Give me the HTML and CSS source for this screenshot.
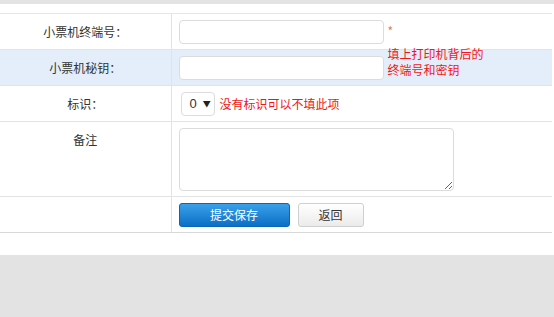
FILE: index.html
```html
<!DOCTYPE html>
<html lang="zh">
<head>
<meta charset="utf-8">
<link rel="stylesheet" href="styles.css">
</head>
<body>
<div class="topbar"></div>
<div class="panel">
  <table class="form">
    <tr>
      <td class="lbl">小票机终端号：</td>
      <td class="val"><div class="cellrow"><input class="txt" type="text"><span class="star">*</span></div></td>
    </tr>
    <tr class="hl">
      <td class="lbl">小票机秘钥：</td>
      <td class="val"><div class="cellrow"><input class="txt" type="text"><span class="tip">填上打印机背后的<br>终端号和密钥</span></div></td>
    </tr>
    <tr>
      <td class="lbl">标识：</td>
      <td class="val"><div class="cellrow"><span class="sel"><span class="selv">0</span><span class="arr">▼</span></span><span class="hint">没有标识可以不填此项</span></div></td>
    </tr>
    <tr class="tall">
      <td class="lbl top">备注</td>
      <td class="val top"><textarea class="area"></textarea></td>
    </tr>
    <tr>
      <td class="lbl"></td>
      <td class="val"><div class="cellrow"><button class="btn primary">提交保存</button><button class="btn plain">返回</button></div></td>
    </tr>
  </table>
</div>
<div class="footer"></div>
</body>
</html>
```
FILE: styles.css
```css
html, body {
  margin: 0;
  padding: 0;
  background: #ffffff;
  font-family: "Noto Sans CJK SC", "Liberation Sans", sans-serif;
  font-size: 12px;
  color: #333;
}
.topbar {
  height: 4px;
  background: #e3e3e3;
}
.panel {
  width: 552px;
  padding-top: 9px;
  height: 251px;
  box-sizing: border-box;
}
.form {
  width: 552px;
  border-collapse: collapse;
  border-top: 1px solid #e6e6e6;
}
.form td {
  border-bottom: 1px solid #e3e3e3;
  height: 36px;
  padding: 0 0 0 7px;
  box-sizing: border-box;
  vertical-align: middle;
}
.form tr:last-child td {
  border-bottom: 1px solid #d8d8d8;
}
.form td.lbl {
  width: 171px;
  border-right: 1px solid #e3e3e3;
  text-align: center;
  padding: 0;
  line-height: 24px;
}
.hl td {
  background: #e4eefa;
}
.tall td {
  height: 75px;
}
.form td.top {
  vertical-align: top;
  padding-top: 6px;
}
.cellrow {
  display: flex;
  align-items: center;
}
.txt {
  width: 205px;
  height: 24px;
  box-sizing: border-box;
  border: 1px solid #dcdcdc;
  border-radius: 4px;
  background: #fff;
  margin: 0;
  padding: 0 4px;
}
.star {
  color: #f57a3c;
  margin-left: 4px;
  margin-top: -2px;
  font-size: 12px;
}
.tip {
  color: #f31515;
  margin-left: 4px;
  margin-top: -12px;
  font-size: 12px;
  line-height: 16px;
}
.sel {
  display: flex;
  align-items: center;
  width: 34px;
  height: 24px;
  box-sizing: border-box;
  margin-left: 2px;
  border: 1px solid #dcdcdc;
  border-radius: 4px;
  background: #fff;
  padding-left: 8px;
}
.selv {
  font-family: "Liberation Sans", sans-serif;
  font-size: 13px;
  color: #333;
}
.arr {
  font-size: 8px;
  margin-left: 6px;
  color: #222;
}
.hint {
  color: #f31515;
  margin-left: 5px;
}
.area {
  display: block;
  width: 275px;
  height: 63px;
  box-sizing: border-box;
  border: 1px solid #dcdcdc;
  border-radius: 4px;
  margin: 0;
  resize: both;
}
.btn {
  height: 24px;
  box-sizing: border-box;
  font-family: "Noto Sans CJK SC", sans-serif;
  font-size: 12px;
  border-radius: 3px;
  padding: 0;
  margin: 0;
}
.primary {
  width: 111px;
  color: #fff;
  border: 1px solid #0b66b5;
  background: linear-gradient(#3aa0ea, #0c6fc4);
}
.plain {
  width: 66px;
  margin-left: 8px;
  color: #333;
  border: 1px solid #cfcfcf;
  background: linear-gradient(#ffffff, #ebebeb);
}
.footer {
  height: 62px;
  background: #e3e3e3;
}
```
